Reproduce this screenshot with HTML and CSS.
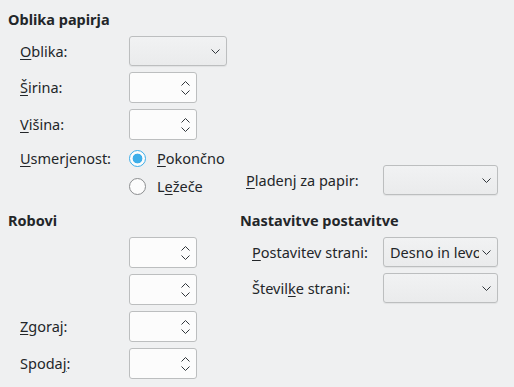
FILE: index.html
```html
<!DOCTYPE html>
<html>
<head>
    <title>Oblika papirja</title>
    <link rel="stylesheet" href="styles.css">
</head>
<body>
    <div class="page">
        <h2 class="heading">Oblika papirja</h2>
        <div class="form">
            <div class="row">
                <span class="label"><u>O</u>blika:</span>
                <div class="combo combo-small">
                    <span class="combo-text"></span>
                    <svg class="chev" width="9" height="5" viewBox="0 0 9 5"><polyline points="0.5,0.5 4.5,4.5 8.5,0.5"/></svg>
                </div>
            </div>
            <div class="row">
                <span class="label"><u>Š</u>irina:</span>
                <div class="spin">
                    <svg class="spin-arrows" width="9" height="14" viewBox="0 0 9 14"><polyline points="0.5,4.5 4.5,0.5 8.5,4.5"/><polyline points="0.5,9.5 4.5,13.5 8.5,9.5"/></svg>
                </div>
            </div>
            <div class="row">
                <span class="label"><u>V</u>išina:</span>
                <div class="spin">
                    <svg class="spin-arrows" width="9" height="14" viewBox="0 0 9 14"><polyline points="0.5,4.5 4.5,0.5 8.5,4.5"/><polyline points="0.5,9.5 4.5,13.5 8.5,9.5"/></svg>
                </div>
            </div>
            <div class="row row-orient">
                <span class="label label-top"><u>U</u>smerjenost:</span>
                <div class="radios">
                    <div class="radio-item">
                        <span class="radio checked"></span>
                        <span><u>P</u>okončno</span>
                    </div>
                    <div class="radio-item">
                        <span class="radio"></span>
                        <span>L<u>e</u>žeče</span>
                    </div>
                </div>
                <div class="tray">
                    <span class="label label-tray"><u>P</u>ladenj za papir:</span>
                    <div class="combo combo-wide">
                        <span class="combo-text"></span>
                        <svg class="chev" width="9" height="5" viewBox="0 0 9 5"><polyline points="0.5,0.5 4.5,4.5 8.5,0.5"/></svg>
                    </div>
                </div>
            </div>
        </div>

        <div class="bottom">
            <div class="col col-left">
                <h2 class="heading">Robovi</h2>
                <div class="form">
                    <div class="row">
                        <span class="label"></span>
                        <div class="spin">
                            <svg class="spin-arrows" width="9" height="14" viewBox="0 0 9 14"><polyline points="0.5,4.5 4.5,0.5 8.5,4.5"/><polyline points="0.5,9.5 4.5,13.5 8.5,9.5"/></svg>
                        </div>
                    </div>
                    <div class="row">
                        <span class="label"></span>
                        <div class="spin">
                            <svg class="spin-arrows" width="9" height="14" viewBox="0 0 9 14"><polyline points="0.5,4.5 4.5,0.5 8.5,4.5"/><polyline points="0.5,9.5 4.5,13.5 8.5,9.5"/></svg>
                        </div>
                    </div>
                    <div class="row">
                        <span class="label"><u>Z</u>goraj:</span>
                        <div class="spin">
                            <svg class="spin-arrows" width="9" height="14" viewBox="0 0 9 14"><polyline points="0.5,4.5 4.5,0.5 8.5,4.5"/><polyline points="0.5,9.5 4.5,13.5 8.5,9.5"/></svg>
                        </div>
                    </div>
                    <div class="row">
                        <span class="label">Spoda<u>j</u>:</span>
                        <div class="spin">
                            <svg class="spin-arrows" width="9" height="14" viewBox="0 0 9 14"><polyline points="0.5,4.5 4.5,0.5 8.5,4.5"/><polyline points="0.5,9.5 4.5,13.5 8.5,9.5"/></svg>
                        </div>
                    </div>
                </div>
            </div>
            <div class="col col-right">
                <h2 class="heading">Nastavitve postavitve</h2>
                <div class="form">
                    <div class="row">
                        <span class="label label-right"><u>P</u>ostavitev strani:</span>
                        <div class="combo combo-wide">
                            <span class="combo-text">Desno in levo</span>
                            <svg class="chev" width="9" height="5" viewBox="0 0 9 5"><polyline points="0.5,0.5 4.5,4.5 8.5,0.5"/></svg>
                        </div>
                    </div>
                    <div class="row">
                        <span class="label label-right">Števil<u>k</u>e strani:</span>
                        <div class="combo combo-wide">
                            <span class="combo-text"></span>
                            <svg class="chev" width="9" height="5" viewBox="0 0 9 5"><polyline points="0.5,0.5 4.5,4.5 8.5,0.5"/></svg>
                        </div>
                    </div>
                </div>
            </div>
        </div>
    </div>
</body>
</html>
```

FILE: styles.css
```css
body {
    font-family: "Noto Sans", sans-serif;
    font-size: 14.5px;
    color: #232629;
    margin: 0;
    background-color: #eff0f1;
}
.page {
    padding: 10px 16px 0 8px;
}
.heading {
    font-size: 14.5px;
    font-weight: bold;
    line-height: 18px;
    margin: 0;
}
.form {
    display: flex;
    flex-direction: column;
    gap: 6px;
    margin-top: 8px;
    padding-left: 12px;
}
.row {
    display: flex;
    align-items: center;
}
.label {
    width: 109px;
    flex-shrink: 0;
    white-space: nowrap;
    line-height: 19px;
}
.label-right {
    width: 131px;
}
u {
    text-decoration-thickness: 1px;
    text-underline-offset: 2px;
}
.combo {
    height: 30px;
    box-sizing: border-box;
    border: 1px solid #bcbebf;
    border-radius: 3px;
    background: linear-gradient(#f1f2f3, #eaebec);
    box-shadow: 0 1px 1px rgba(0,0,0,0.06);
    display: flex;
    align-items: center;
    padding: 0 6px 0 6px;
}
.combo-small {
    width: 98px;
}
.combo-wide {
    width: 115px;
}
.combo-text {
    flex: 1;
    overflow: hidden;
    white-space: nowrap;
    margin-right: 3px;
}
.chev {
    flex-shrink: 0;
    fill: none;
    stroke: #31363b;
    stroke-width: 1;
}
.spin {
    width: 68px;
    height: 31px;
    box-sizing: border-box;
    border: 1px solid #bcbebf;
    border-radius: 3px;
    background: #fcfcfc;
    display: flex;
    align-items: center;
    justify-content: flex-end;
    padding-right: 6px;
}
.spin-arrows {
    fill: none;
    stroke: #31363b;
    stroke-width: 1;
}
.row-orient {
    align-items: flex-start;
    margin-top: 2px;
}
.label-top {
    line-height: 20px;
}
.radios {
    display: flex;
    flex-direction: column;
    gap: 8px;
}
.radio-item {
    display: flex;
    align-items: center;
    gap: 11px;
    height: 20px;
}
.radio {
    width: 17px;
    height: 17px;
    box-sizing: border-box;
    border-radius: 50%;
    border: 1px solid #8c8e90;
    background: #fcfcfc;
}
.radio.checked {
    border-color: #3daee9;
    background: radial-gradient(circle, #3daee9 0 4.6px, #fcfcfc 5.2px);
}
.tray {
    margin-left: auto;
    align-self: flex-end;
    display: flex;
    align-items: center;
    margin-bottom: 1px;
}
.label-tray {
    width: 137px;
}
.bottom {
    display: grid;
    grid-template-columns: 232px 1fr;
    margin-top: 15px;
}
```
